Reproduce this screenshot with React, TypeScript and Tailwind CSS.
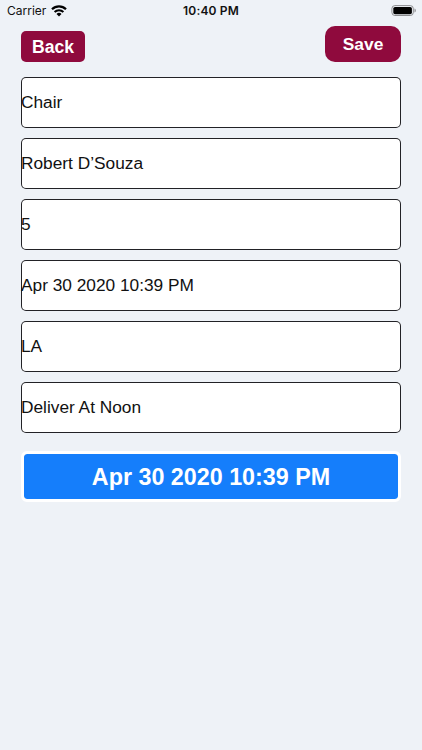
const fields: string[] = [
  'Chair',
  'Robert D’Souza',
  '5',
  'Apr 30 2020 10:39 PM',
  'LA',
  'Deliver At Noon',
];

function WifiIcon() {
  return (
    <svg className="h-[12px] w-[16px]" viewBox="0 0 16 12" fill="none">
      <path d="M1 4.3a9.9 9.9 0 0 1 14 0" stroke="#000" strokeWidth="2.2" />
      <path d="M3.6 7a6.2 6.2 0 0 1 8.8 0" stroke="#000" strokeWidth="2" />
      <path d="M8 11.5 5.5 9a3.5 3.5 0 0 1 5 0z" fill="#000" />
    </svg>
  );
}

function BatteryIcon() {
  return (
    <svg className="h-[12px] w-[26px]" viewBox="0 0 26 12" fill="none">
      <rect x="1.9" y="0.6" width="21.4" height="9.9" rx="3" stroke="#8b8c8f" strokeWidth="1" />
      <rect x="3.3" y="1.9" width="18.6" height="7.3" rx="1.7" fill="#000" />
      <path d="M24.5 3.6v4c.8-.3 1.3-1.1 1.3-2s-.5-1.7-1.3-2z" fill="#8b8c8f" />
    </svg>
  );
}

function StatusBar() {
  return (
    <div className="grid h-[22px] grid-cols-3 items-center pl-[7px] pr-[6px] font-['Inter',sans-serif] text-[12px] leading-[22px] text-[#111]">
      <div className="flex items-center gap-[5px]">
        <span>Carrier</span>
        <WifiIcon />
      </div>
      <span className="-ml-[1px] text-center font-semibold tracking-[0.15px]">10:40 PM</span>
      <div className="flex justify-end">
        <BatteryIcon />
      </div>
    </div>
  );
}

export default function App() {
  return (
    <main className="h-[750px] w-full overflow-hidden bg-[#eef2f7] font-['Liberation_Sans',sans-serif]">
      <StatusBar />
      <div className="w-[401px] pl-[21px] pt-[4px]">
        <div className="flex items-end justify-between">
          <button className="h-[31.5px] w-[64px] rounded-[5px] bg-[#8f0a3d] text-[17.6px] font-bold leading-[32px] text-white">
            Back
          </button>
          <button className="h-[36.4px] w-[76px] rounded-[10px] bg-[#8f0a3d] text-[17.4px] font-bold leading-[37px] text-white">
            Save
          </button>
        </div>
        <div className="mt-[14.3px] flex flex-col gap-[10.1px]">
          {fields.map((value) => (
            <div
              key={value}
              className="flex h-[50.9px] items-center rounded-[5px] bg-white pt-[1px] text-[17.3px] text-[#111] ring-1 ring-inset ring-[#222226]"
            >
              <span className="whitespace-nowrap">{value}</span>
            </div>
          ))}
        </div>
        <button className="mt-[18.6px] h-[51px] w-full rounded-[6px] border-[3px] border-white bg-[#157efb] bg-clip-padding text-[23.3px] font-bold leading-[47px] text-white">
          Apr 30 2020 10:39 PM
        </button>
      </div>
    </main>
  );
}
